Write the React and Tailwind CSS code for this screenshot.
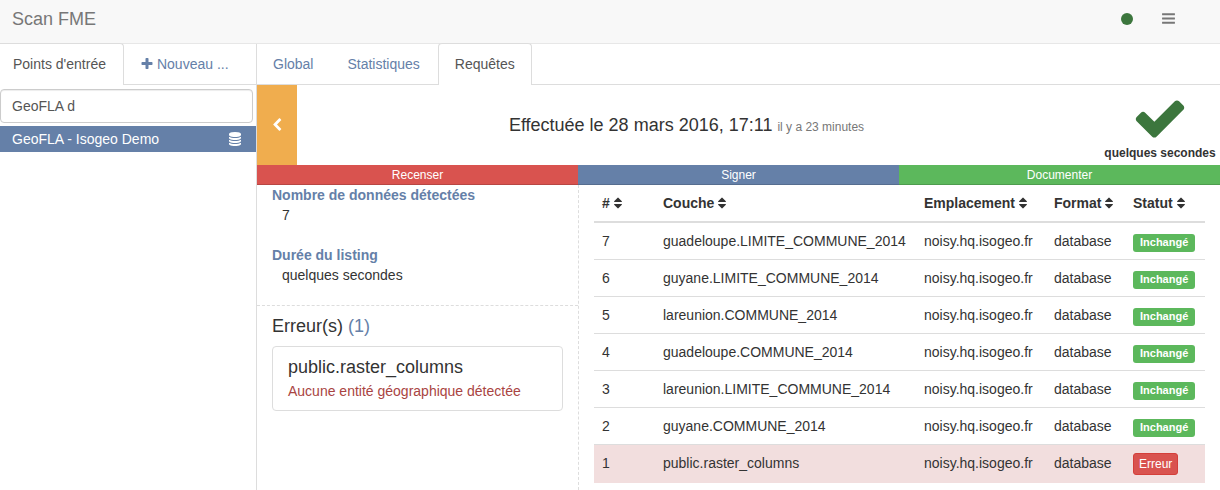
import React from "react";

const ICONS = {
  check:
    "M1671 566q0 40-28 68l-724 724-136 136q-28 28-68 28t-68-28l-136-136-362-362q-28-28-28-68t28-68l136-136q28-28 68-28t68 28l294 295 656-657q28-28 68-28t68 28l136 136q28 28 28 68z",
  bars:
    "M1664 1344v128q0 26-19 45t-45 19h-1408q-26 0-45-19t-19-45v-128q0-26 19-45t45-19h1408q26 0 45 19t19 45zm0-512v128q0 26-19 45t-45 19h-1408q-26 0-45-19t-19-45v-128q0-26 19-45t45-19h1408q26 0 45 19t19 45zm0-512v128q0 26-19 45t-45 19h-1408q-26 0-45-19t-19-45v-128q0-26 19-45t45-19h1408q26 0 45 19t19 45z",
  database:
    "M896 768q237 0 443-43t325-127v170q0 69-103 128t-280 93.5-385 34.5-385-34.5-280-93.5-103-128v-170q119 84 325 127t443 43zm0 768q237 0 443-43t325-127v170q0 69-103 128t-280 93.5-385 34.5-385-34.5-280-93.5-103-128v-170q119 84 325 127t443 43zm0-384q237 0 443-43t325-127v170q0 69-103 128t-280 93.5-385 34.5-385-34.5-280-93.5-103-128v-170q119 84 325 127t443 43zm0-1152q208 0 385 34.5t280 93.5 103 128v128q0 69-103 128t-280 93.5-385 34.5-385-34.5-280-93.5-103-128v-128q0-69 103-128t280-93.5 385-34.5z",
  plus:
    "M1600 736v192q0 40-28 68t-68 28h-416v416q0 40-28 68t-68 28h-192q-40 0-68-28t-28-68v-416h-416q-40 0-68-28t-28-68v-192q0-40 28-68t68-28h416v-416q0-40 28-68t68-28h192q40 0 68 28t28 68v416h416q40 0 68 28t28 68z",
  chevronLeft:
    "M1427 301l-531 531 531 531q19 19 19 45t-19 45l-166 166q-19 19-45 19t-45-19l-742-742q-19-19-19-45t19-45l742-742q19-19 45-19t45 19l166 166q19 19 19 45t-19 45z",
  sort:
    "M1408 1088q0 26-19 45l-448 448q-19 19-45 19t-45-19l-448-448q-19-19-19-45t19-45 45-19h896q26 0 45 19t19 45zm0-384q0 26-19 45t-45 19h-896q-26 0-45-19t-19-45 19-45l448-448q19-19 45-19t45 19l448 448q19 19 19 45z",
};

function Icon({ name, className }) {
  return (
    <svg viewBox="0 0 1792 1792" fill="currentColor" aria-hidden="true" className={className}>
      <path d={ICONS[name]} />
    </svg>
  );
}

const COLUMNS = [
  { label: "#", width: "w-[61px]" },
  { label: "Couche", width: "w-auto" },
  { label: "Emplacement", width: "w-[130px]" },
  { label: "Format", width: "w-[79px]" },
  { label: "Statut", width: "w-20" },
];

const ROWS = [
  { id: 7, layer: "guadeloupe.LIMITE_COMMUNE_2014" },
  { id: 6, layer: "guyane.LIMITE_COMMUNE_2014" },
  { id: 5, layer: "lareunion.COMMUNE_2014" },
  { id: 4, layer: "guadeloupe.COMMUNE_2014" },
  { id: 3, layer: "lareunion.LIMITE_COMMUNE_2014" },
  { id: 2, layer: "guyane.COMMUNE_2014" },
  { id: 1, layer: "public.raster_columns", error: true },
];

const STEPS = [
  { label: "Recenser", color: "bg-[#d9534f]" },
  { label: "Signer", color: "bg-[#6580a8]" },
  { label: "Documenter", color: "bg-[#5cb85c]" },
];

function Header() {
  return (
    <header className="flex h-11 items-center justify-between border-b border-[#e7e7e7] bg-[#f8f8f8] pb-1.5 pl-3 pr-11 text-[#777]">
      <a href="#" className="text-lg leading-5">Scan FME</a>
      <div className="flex items-center gap-7">
        <span role="status" aria-label="Connecté" className="size-3 rounded-full bg-[#3c763d]" />
        <button type="button" aria-label="Menu">
          <Icon name="bars" className="size-[15px]" />
        </button>
      </div>
    </header>
  );
}

function Sidebar() {
  return (
    <aside className="w-64 shrink-0">
      <nav className="flex h-[41px] border-b border-[#ddd] leading-5">
        <a href="#" className="-my-px rounded-tr border-r border-t border-[#ddd] bg-white py-2.5 pl-[13px] pr-[17px] text-[#555]">
          Points d'entrée
        </a>
        <a href="#" className="flex items-center gap-[3px] px-4 text-[#6580a8]">
          <Icon name="plus" className="size-3.5" />
          Nouveau ...
        </a>
      </nav>
      <div className="pb-[3px] pr-[3px] pt-1">
        <input
          type="text"
          aria-label="Filtrer les points d'entrée"
          defaultValue="GeoFLA d"
          className="block h-[34px] w-full rounded border border-[#ccc] px-[11px] text-[#555] shadow-[inset_0_1px_1px_rgba(0,0,0,0.075)] outline-none"
        />
      </div>
      <a href="#" className="flex items-center justify-between bg-[#6580a8] py-[3px] pl-3 pr-3.5 leading-5 text-white">
        GeoFLA - Isogeo Demo
        <Icon name="database" className="size-3.5" />
      </a>
    </aside>
  );
}

function MainTabs() {
  return (
    <nav className="flex h-[41px] gap-0.5 border-b border-[#ddd] leading-5 text-[#6580a8]">
      <a href="#" className="px-4 py-2.5">Global</a>
      <a href="#" className="px-4 py-2.5">Statistiques</a>
      <a href="#" className="-my-px rounded-t border-x border-t border-[#ddd] bg-white px-4 py-2.5 text-[#555]">
        Requêtes
      </a>
    </nav>
  );
}

function Summary() {
  return (
    <div className="flex h-20">
      <button type="button" aria-label="Retour" className="flex w-10 items-center justify-center bg-[#f0ad4e] text-white">
        <Icon name="chevronLeft" className="size-3.5" />
      </button>
      <h1 className="flex flex-1 items-baseline justify-center gap-[5px] self-center pr-6 text-lg leading-5">
        Effectuée le 28 mars 2016, 17:11
        <small className="text-xs text-[#777]">il y a 23 minutes</small>
      </h1>
      <div className="flex w-[120px] flex-col items-center pt-[5px] text-[#3c763d]">
        <Icon name="check" className="size-14" />
        <strong className="whitespace-nowrap text-xs leading-[14px] text-[#333]">quelques secondes</strong>
      </div>
    </div>
  );
}

function Steps() {
  return (
    <div className="grid grid-cols-3 text-center text-xs leading-5 text-white">
      {STEPS.map((step) => (
        <div key={step.label} className={`${step.color} shadow-[inset_0_-1px_0_rgba(0,0,0,0.15)]`}>
          {step.label}
        </div>
      ))}
    </div>
  );
}

function Details() {
  return (
    <section className="col-span-1">
      <dl className="border-b border-dashed border-[#ddd] px-[15px] leading-5">
        <dt className="font-bold text-[#6580a8]">Nombre de données détectées</dt>
        <dd className="mb-5 pl-2.5">7</dd>
        <dt className="font-bold text-[#6580a8]">Durée du listing</dt>
        <dd className="pb-5 pl-2.5">quelques secondes</dd>
      </dl>
      <div className="px-[15px] pt-2.5">
        <h2 className="text-lg leading-5">
          Erreur(s) <span className="text-[#6580a8]">(1)</span>
        </h2>
        <article className="mt-2.5 rounded border border-[#ddd] px-[15px] pb-[9px] pt-2.5">
          <h3 className="text-lg leading-5">public.raster_columns</h3>
          <p className="mt-1 leading-5 text-[#a94442]">Aucune entité géographique détectée</p>
        </article>
      </div>
    </section>
  );
}

function LayersTable() {
  return (
    <section className="col-span-2 border-l border-dashed border-[#ddd] px-[15px]">
      <table className="w-full table-fixed border-separate border-spacing-0 text-left leading-5">
        <thead>
          <tr>
            {COLUMNS.map((column) => (
              <th key={column.label} scope="col" className={`${column.width} whitespace-nowrap border-b-2 border-[#ddd] py-2 pl-2 pr-0`}>
                <button type="button" className="flex items-center font-bold">
                  {column.label}
                  <Icon name="sort" className="ml-px size-3.5" />
                </button>
              </th>
            ))}
          </tr>
        </thead>
        <tbody className="align-top [&>tr+tr>td]:border-t [&>tr+tr>td]:border-[#ddd]">
          {ROWS.map((row) => (
            <tr key={row.id} className={row.error ? "bg-[#f2dede]" : ""}>
              <td className="py-2 pl-2">{row.id}</td>
              <td className="py-2 pl-2">{row.layer}</td>
              <td className="py-2 pl-2">noisy.hq.isogeo.fr</td>
              <td className="py-2 pl-2">database</td>
              <td className="pl-2">
                {row.error ? (
                  <button type="button" className="my-2 block rounded-[3px] border border-[#d43f3a] bg-[#d9534f] px-[5px] text-xs leading-5 text-white">
                    Erreur
                  </button>
                ) : (
                  <span className="mt-[11px] block w-fit rounded-[3px] bg-[#5cb85c] px-[7px] pb-px text-[11px] font-bold leading-[17px] text-white">
                    Inchangé
                  </span>
                )}
              </td>
            </tr>
          ))}
        </tbody>
      </table>
    </section>
  );
}

export default function App() {
  return (
    <div className="flex min-h-screen flex-col bg-white font-['Liberation_Sans',Arial,sans-serif] text-sm text-[#333]">
      <Header />
      <div className="flex flex-1">
        <Sidebar />
        <main className="flex min-w-0 flex-1 flex-col border-l border-[#ddd]">
          <MainTabs />
          <Summary />
          <Steps />
          <div className="grid flex-1 grid-cols-3">
            <Details />
            <LayersTable />
          </div>
        </main>
      </div>
    </div>
  );
}
